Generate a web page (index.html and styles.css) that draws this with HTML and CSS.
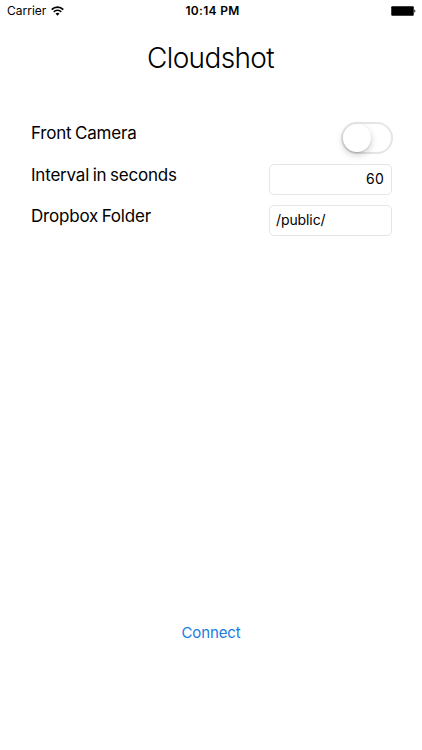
FILE: index.html
```html
<!DOCTYPE html>
<html lang="en">

<head>
    <meta charset="UTF-8">
    <meta name="viewport" content="width=device-width, initial-scale=1.0">
    <title>Cloudshot</title>
    <link rel="stylesheet" href="styles.css">
</head>

<body>
    <div class="status_bar">
        <div class="carrier">
            <span>Carrier</span>
            <svg class="wifi" width="13" height="10" viewBox="0 0 13 10">
                <path d="M0.7 3.6a8.2 8.2 0 0 1 11.6 0M2.8 5.8a5.2 5.2 0 0 1 7.4 0" fill="none" stroke="#000" stroke-width="1.7"/>
                <path d="M6.5 9.7L4.5 7.6a2.9 2.9 0 0 1 4 0z"/>
            </svg>
        </div>
        <div class="time">10:14 PM</div>
        <div class="power">
            <svg width="25" height="10" viewBox="0 0 25 10">
                <rect x="0.25" y="0.25" width="22.5" height="9.5" rx="1"/>
                <path d="M23.4 3.3a2 2 0 0 1 0 3.4z"/>
            </svg>
        </div>
    </div>
    <h1>Cloudshot</h1>
    <form class="settings">
        <div class="row">
            <label for="camera">Front Camera</label>
            <label class="switch"><input type="checkbox" id="camera"><span class="knob"></span></label>
        </div>
        <div class="row">
            <label for="interval">Interval in seconds</label>
            <input class="field number" type="text" id="interval" value="60">
        </div>
        <div class="row">
            <label for="folder">Dropbox Folder</label>
            <input class="field" type="text" id="folder" value="/public/">
        </div>
    </form>
    <a class="connect" href="javascript:;">Connect</a>
</body>

</html>
```
FILE: styles.css
```css
html,body,h1,form,input {
    padding: 0;
    margin: 0;
    box-sizing: border-box;
}
body {
    height: 750px;
    display: flex;
    flex-direction: column;
    background-color: #fff;
    color: #000;
    font-family: Inter, "Liberation Sans", sans-serif;
    overflow: hidden;
}
.status_bar {
    height: 22px;
    padding: 0 6px 0 7px;
    display: grid;
    grid-template-columns: 1fr auto 1fr;
    align-items: center;
    font-size: 12px;
}
.carrier {
    display: flex;
    align-items: center;
    gap: 5px;
    line-height: 14px;
    padding-bottom: 1px;
}
.wifi {
    margin-top: 1px;
}
.time {
    margin: 0 -1px 1px 1px;
    font-weight: 600;
    letter-spacing: .3px;
}
.power {
    display: flex;
    justify-content: flex-end;
}
h1 {
    margin-top: 19px;
    padding-right: 1px;
    text-align: center;
    font-size: 28px;
    line-height: 35px;
    font-weight: 300;
    letter-spacing: -.65px;
}
.settings {
    margin-top: 47px;
    padding: 0 30px 0 31px;
}
.row {
    height: 41px;
    display: flex;
    justify-content: space-between;
    font-size: 17px;
    line-height: 22px;
    letter-spacing: -.2px;
    word-spacing: -1px;
}
.row:first-child {
    line-height: 20px;
}
.switch {
    width: 52px;
    height: 32px;
    margin: -1px -1px 0 0;
    box-sizing: border-box;
    border: 2px solid #e5e5e5;
    border-radius: 16px;
}
.switch input {
    display: none;
}
.knob {
    display: block;
    width: 28px;
    height: 28px;
    border-radius: 50%;
    background-color: #fff;
    box-shadow: 0 3px 7px rgba(0, 0, 0, .2), 0 1px 1px rgba(0, 0, 0, .12);
}
.field {
    width: 123px;
    height: 31px;
    padding: 0 7px 2px 6px;
    border: 1px solid #e5e5e5;
    border-radius: 5px;
    font: 14px Inter, "Liberation Sans", sans-serif;
    letter-spacing: -.1px;
}
.number {
    letter-spacing: .2px;
    text-align: right;
}
.connect {
    align-self: center;
    margin-top: 377px;
    color: #1a7be0;
    font-size: 15px;
    line-height: 20px;
    letter-spacing: -.1px;
    text-decoration: none;
}
```
